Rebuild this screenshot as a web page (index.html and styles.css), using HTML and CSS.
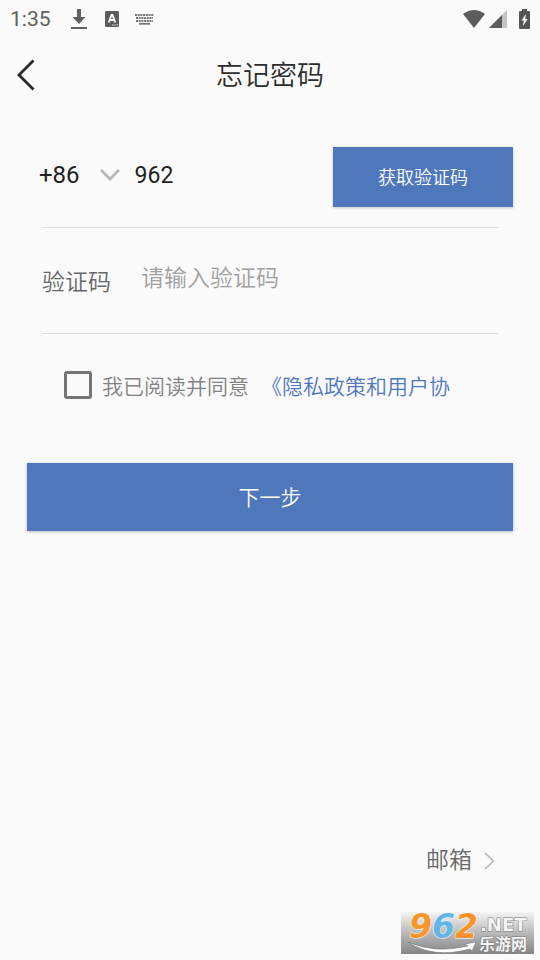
FILE: index.html
```html
<!DOCTYPE html>
<html lang="zh-CN">
<head>
<meta charset="utf-8">
<meta name="viewport" content="width=device-width, initial-scale=1">
<title>忘记密码</title>
<link rel="stylesheet" href="styles.css">
</head>
<body>
<div class="status">
  <span class="clock">1:35</span>
  <svg class="download" width="16" height="22" viewBox="0 0 16 22"><path d="M6 1h4v8h4.500L8 16 1.500 9H6zM0 19h16v2H0z" fill="#606060"/></svg>
  <svg class="lang" width="16" height="16" viewBox="0 0 16 16"><rect x="1" width="14" height="16" rx="1.500" fill="#5c5c5c"/><path d="M4.700 11.500L7.500 4h1L11.300 11.500M5.500 9h5" fill="none" stroke="#fafafa" stroke-width="1.800"/><path d="M8 14h1.300M10.300 14h1.300M12.600 14h1.300" stroke="#fafafa" stroke-width="1.200"/></svg>
  <svg class="keys" width="20" height="12" viewBox="0 0 20 12"><g fill="none" stroke="#777" stroke-width="1.800"><path d="M0 2h19" stroke-dasharray="2 .7"/><path d="M1 5h17" stroke-dasharray="2 .7"/><path d="M1 8h17" stroke-dasharray="2 .7"/><path d="M4 10.800h11"/></g></svg>
  <svg class="wifi" width="22" height="18" viewBox="0 0 22 18"><path d="M0 4Q11-4 22 4L11 18z" fill="#5c5c5c"/></svg>
  <svg class="signal" width="18" height="18" viewBox="0 0 18 18"><path d="M0 18L18 0v18z" fill="#c4c4c4"/><path d="M0 18L13 5v13z" fill="#5c5c5c"/></svg>
  <svg class="battery" width="11" height="20" viewBox="0 0 11 20"><path d="M3 0h5v2h2q1 0 1 1v16q0 1-1 1H1q-1 0-1-1V3q0-1 1-1h2z" fill="#555"/><path d="M6.800 5L2.500 11.500h2.300L4 17l4.700-7H6.300z" fill="#fafafa"/></svg>
</div>
<header class="bar">
  <button class="back" type="button" aria-label="返回"><svg width="18" height="32" viewBox="0 0 18 32"><path d="M16.500 1.500L2 16l14.500 14.500" fill="none" stroke="#292929" stroke-width="2.800"/></svg></button>
  <h1>忘记密码</h1>
</header>
<form class="form">
  <div class="row phone">
    <button class="code" type="button"><span>+86</span><svg width="20" height="12" viewBox="0 0 20 12"><path d="M1 1l9 9 9-9" fill="none" stroke="#b8b8b8" stroke-width="2.800"/></svg></button>
    <input class="number" type="tel" value="962" aria-label="手机号">
    <button class="send" type="button">获取验证码</button>
  </div>
  <div class="row verify">
    <label for="verify">验证码</label>
    <input id="verify" type="text" placeholder="请输入验证码">
  </div>
  <div class="agree">
    <input id="agree" type="checkbox">
    <label for="agree">我已阅读并同意</label>
    <a href="#policy">《隐私政策和用户协</a>
  </div>
  <button class="next" type="submit">下一步</button>
</form>
<a class="mail" href="#mail">邮箱<svg width="11" height="18" viewBox="0 0 11 18"><path d="M1 1l8.500 8L1 17" fill="none" stroke="#b4b4b4" stroke-width="1.500"/></svg></a>
<svg class="mark" width="133" height="42" viewBox="0 0 133 42">
  <defs>
    <linearGradient id="shade" x1="0" y1="0" x2="0" y2="1"><stop offset="0" stop-color="#f4f4f4"/><stop offset=".5" stop-color="#b9b9b9"/><stop offset="1" stop-color="#858585"/></linearGradient>
  </defs>
  <rect width="133" height="42" fill="url(#shade)"/>
  <path d="M7 30Q34 42 67 34l-3-2 11-2-4 9-2-2Q32 47 7 30z" fill="#fff" stroke="#777" stroke-width=".6"/>
  <g class="outlined">
    <text class="digits" x="8" y="26"><tspan fill="#f7942b">9</tspan><tspan fill="#62b5e6">6</tspan><tspan fill="#f7942b">2</tspan></text>
    <text class="net" x="79" y="19">.NET</text>
    <text class="cjk" x="78" y="38">乐游网</text>
  </g>
</svg>
</body>
</html>
```
FILE: styles.css
```css
* { box-sizing: border-box; }
body {
  margin: 0;
  min-height: 100vh;
  display: flex;
  flex-direction: column;
  position: relative;
  background: #fafafa;
  color: #212121;
  font-family: Roboto, "Noto Sans CJK SC", sans-serif;
  font-weight: 350;
}
button, input { font: inherit; color: inherit; border: 0; padding: 0; background: none; border-radius: 0; }
a { text-decoration: none; }
svg { display: block; flex: none; }

.status { height: 37px; display: flex; align-items: center; padding: 1px 10px 0; }
.clock { font-size: 21px; font-weight: 400; color: #606060; }
.download { margin-left: 20px; }
.lang { margin-left: 17px; }
.keys { margin-left: 15px; }
.wifi { margin-left: auto; }
.signal { margin-left: 4px; }
.battery { margin-left: 12px; }

.bar { height: 75px; display: grid; grid-template-columns: 56px 1fr 56px; align-items: center; }
.back { padding-left: 17px; height: 48px; }
h1 { margin: 0; padding-top: 2px; font-size: 27px; line-height: 36px; font-weight: 350; text-align: center; color: #2c2c2c; }

.form { padding: 0 27px; }
.row { display: flex; margin: 0 15px; border-bottom: 1px solid #dcdcdc; }
.phone { height: 116px; padding-top: 35px; align-items: flex-start; font-size: 23px; font-weight: 400; }
.code { display: flex; align-items: center; gap: 20px; height: 56px; margin-left: -3px; font-size: 24px; }
.number { flex: 1; min-width: 0; height: 56px; padding-left: 15px; }
.send {
  width: 180px;
  height: 60px;
  margin-right: -15px;
  padding-bottom: 2px;
  background: #4e77bc;
  color: #fff;
  font-size: 18px;
  font-weight: 350;
  box-shadow: 0 1px 3px rgba(0, 0, 0, .2);
}
.verify { height: 106px; align-items: center; font-size: 23px; }
.verify label { padding-bottom: 2px; color: #686868; }
.verify input { flex: 1; min-width: 0; height: 48px; margin: 0 0 4px 30px; }
.verify input::placeholder { color: #a0a0a0; opacity: 1; }

.agree { display: flex; align-items: center; height: 102px; padding-left: 37px; font-size: 21px; color: #828282; white-space: nowrap; }
.agree input { appearance: none; width: 28px; height: 28px; margin: 0 10px 0 0; border: 3px solid #757575; border-radius: 3px; }
.agree a { margin-left: 12px; color: #4e78c0; }
.next {
  display: block;
  width: 100%;
  height: 68px;
  margin-top: 27px;
  padding-bottom: 2px;
  background: #4e77bc;
  color: #fff;
  font-size: 21px;
  box-shadow: 0 1px 3px rgba(0, 0, 0, .25);
}

.mail {
  display: flex;
  align-items: center;
  align-self: flex-end;
  gap: 12px;
  margin: auto 45px 82px 0;
  font-size: 23px;
  line-height: 34px;
  color: #686868;
}

.mark { position: absolute; right: 6px; bottom: 6px; overflow: visible; }
.outlined { paint-order: stroke; stroke: #fff; stroke-width: 1px; stroke-linejoin: round; }
.digits { font: italic 700 33px "DejaVu Sans", sans-serif; }
.net { font: 700 18px "DejaVu Sans", sans-serif; fill: #f4f4f4; stroke: #777; }
.cjk { font: 700 16px "Noto Sans CJK SC", sans-serif; fill: #f4f4f4; stroke: #777; }
```
